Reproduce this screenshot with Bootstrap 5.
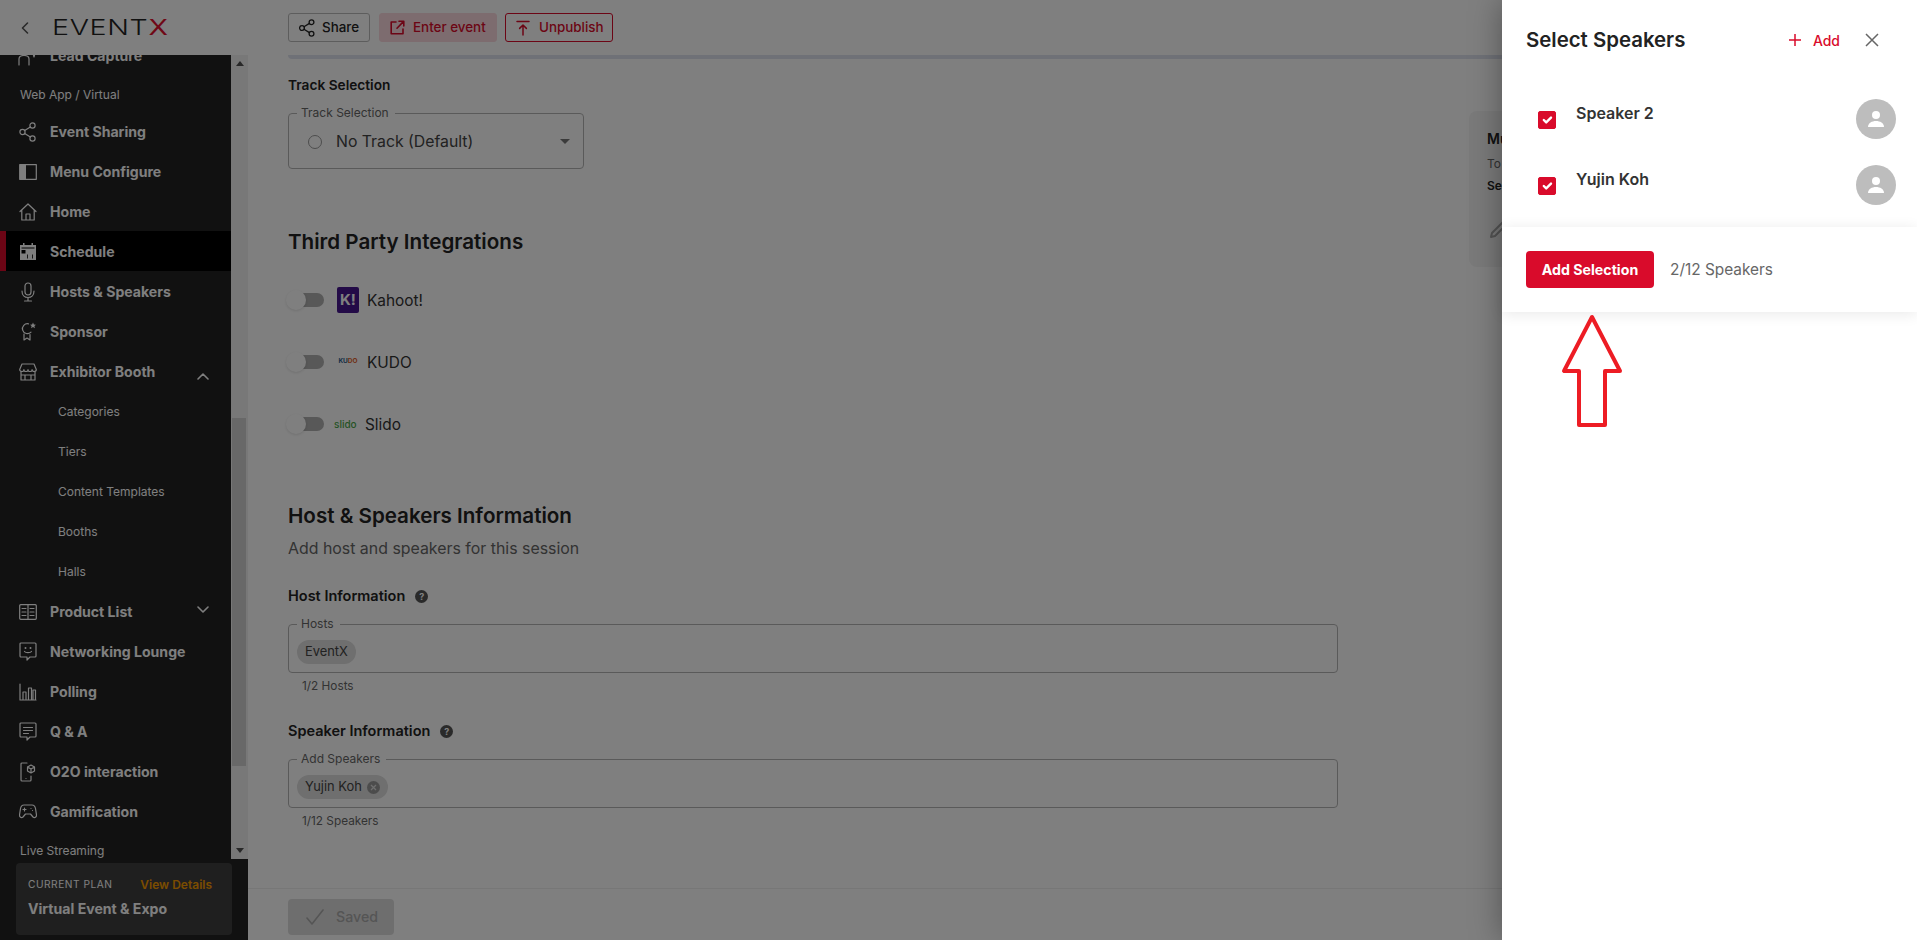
<!doctype html>
<html lang="en">
<head>
<meta charset="utf-8">
<title>EventX - Select Speakers</title>
<link href="https://cdn.jsdelivr.net/npm/bootstrap@5.3.0/dist/css/bootstrap.min.css" rel="stylesheet">
<style>
html,body{height:940px;overflow:hidden}
body{font-family:Inter,"Noto Sans",sans-serif;color:#222;background:#fff;position:relative;font-size:14px}
svg{display:block;flex:none}
.ln{fill:none;stroke:currentColor;stroke-width:1.2;stroke-linecap:round;stroke-linejoin:round}
.top-bar{height:55px;background:#fff;flex:none}
.back-cell{width:52px}
.brand-wrap{width:236px}
.brand-text{display:inline-block;font-size:22px;font-weight:300;letter-spacing:.5px;line-height:1;color:#222;transform:scaleX(1.3);transform-origin:left center}
.brand-text b{font-weight:400;color:#e0102e}
.top-btn{height:29px;padding:0 0 0 10px;font-size:13.4px;font-weight:500;border-radius:3px;display:flex;align-items:center;background:#fff}
.btn-share{width:82px;border:1px solid #bbb;color:#222;gap:7px;margin-right:9px}
.btn-enter{width:118px;border:1px solid #fbd9de;background:#fbd9de;color:#d90b2b;gap:8px;margin-right:8px}
.btn-unpub{width:108px;border:1px solid #d90b2b;color:#d90b2b;gap:9px}
.body-row{height:885px}
.side-col{width:248px;background:#222;color:#fff}
.side-main{height:804px}
.side-scroll{width:231px;overflow:hidden}
.side-inner{margin-top:-20px}
.side-row{height:40px;padding:1px 0 0 19px;display:flex;align-items:center;font-size:14.1px;font-weight:700;position:relative}
.side-row .ico{width:18px;margin-right:13px;display:flex;justify-content:center}
.side-row.active{background:#000;border-left:6px solid #d90b2b;padding-left:13px}
.side-head{height:36px;padding:3px 0 0 20px;display:flex;align-items:center;font-size:12px;font-weight:400}
.side-sub{height:40px;padding:2px 0 0 58px;display:flex;align-items:center;font-size:12px;font-weight:400}
.chev{position:absolute;left:197px}
.chev-up{top:21px}
.chev-down{top:15px}
.sbar{width:17px;background:#f1f1f1}
.sbar-btn{height:17px;display:flex;align-items:center;justify-content:center;color:#505050}
.sbar-thumb{width:14px;height:348px;margin-top:346px;background:#d0d0d0;margin-left:1px}
.plan-wrap{height:81px;padding:4px 16px 0}
.plan-box{width:216px;height:72px;background:#3e3e3e;border-radius:4px;padding:13px 20px 0 12px}
.plan-k{font-size:10.2px;letter-spacing:.5px;font-weight:400}
.plan-v{color:#f59a00;font-size:12px;font-weight:600}
.plan-n{font-size:14.1px;font-weight:700;margin-top:4px}
.band{height:4px;margin-left:40px;background:#dfe3ee;border-bottom-left-radius:6px;flex:none}
.content-wrap{padding-left:40px;overflow:hidden}
.form-col{width:1050px;flex:none}
.sec-label{font-size:14.5px;font-weight:600;line-height:20px;color:#222}
.sec-label-sm{font-size:13.7px;font-weight:600;line-height:20px;color:#222;margin-top:16px}
.sec-title{font-size:20.6px;font-weight:600;line-height:28px;color:#222;margin:0}
.fset{border:1px solid #b5b5b5;border-radius:4px;padding:0 8px;margin:10px 0 0;display:block;min-width:0}
.fset legend{float:none;width:auto;font-size:12px;line-height:16px;padding:0 6px 0 4px;margin:0;color:#666}
.fset-track{width:296px;height:64px}
.track-inner{margin-top:9px;padding:0 5px 0 11px}
.radio-dot{width:14px;height:14px;border:1px solid #999;border-radius:50%}
.track-val{font-size:15.8px;color:#444;margin-left:14px}
.caret-down{width:0;height:0;border-left:5px solid transparent;border-right:5px solid transparent;border-top:5px solid #777}
.m-third{margin-top:59px}
.tg-row{height:40px;margin-top:22px;display:flex;align-items:center}
.tg-first{margin-top:24px}
.tg-track{width:28px;height:14px;background:#b0b0b0;border-radius:7px;margin-left:8px;position:relative;flex:none}
.tg-thumb{position:absolute;left:-10px;top:-3px;width:20px;height:20px;border-radius:50%;background:#fff;box-shadow:0 1px 3px rgba(0,0,0,.12)}
.tg-name{font-size:15.4px;color:#333;padding-top:1px}
.kh-logo{width:22px;height:26px;background:#46178f;border-radius:2px;color:#fff;font-size:15px;font-weight:700;line-height:26px;text-align:center;margin:0 8px 0 13px}
.kd-logo{width:22px;margin:0 8px 0 13px;font-size:6.5px;font-weight:700;text-align:center}
.kd-a{color:#2a5b8c}
.kd-b{color:#e2602c}
.sl-logo{width:28px;margin:0 3px 0 10px;font-size:10px;font-weight:500;color:#4aa74a}
.m-host{margin-top:58px}
.sub-text{font-size:15.9px;line-height:24px;color:#666;margin-top:7px}
.m-25{margin-top:25px}
.m-27{margin-top:27px}
.help-q{width:13px;height:13px;border-radius:50%;background:#555;color:#fff;font-size:9px;font-weight:700;line-height:13px;text-align:center;margin-left:10px}
.fset-chip{height:57px}
.chip-item{height:24px;border-radius:12px;background:#dedede;padding:0 8px;font-size:12.9px;color:#444;display:inline-flex;align-items:center;gap:5px;margin-top:8px}
.chip-x{width:13px;height:13px;border-radius:50%;background:#999;color:#dedede;display:flex;align-items:center;justify-content:center}
.fset-note{font-size:11.8px;line-height:16px;color:#666;margin:5px 0 0 14px}
.aside-box{width:500px;height:156px;margin:52px 0 0 131px;background:#f4f4f4;border-radius:8px;padding:12px 14px 0 18px;flex:none}
.aside-t{font-size:14px;font-weight:600;line-height:20px;margin-top:6px}
.aside-d{font-size:12px;color:#666;margin-top:6px}
.aside-s{font-size:12px;font-weight:600;margin-top:4px}
.aside-pen{margin:24px 0 0 2px;color:#a8a8a8}
.save-bar{height:52px;border-top:1px solid #eee;padding:10px 0 0 40px;flex:none}
.saved-btn{width:106px;height:36px;background:#ddd;border-radius:4px;color:#aaa;display:flex;align-items:center;gap:12px;padding-left:18px;font-size:14.2px;font-weight:500}
.dim-layer{position:absolute;inset:0;background:rgba(0,0,0,.5);z-index:5}
.drawer{position:absolute;top:0;right:0;bottom:0;width:415px;background:#fff;z-index:6;box-shadow:0 0 30px rgba(0,0,0,.35)}
.dr-head{height:80px;padding:0 38px 0 24px}
.dr-title{font-size:20.4px;font-weight:600;color:#222;margin:0;line-height:1.2}
.dr-add{color:#d90b2b;font-size:14px;font-weight:500;gap:12px;margin-right:25px}
.dr-close{color:#666}
.dr-list{height:147px;padding:6px 0 0 36px}
.dr-row{height:66px;padding-right:21px}
.dr-check.form-check-input{width:18px;height:18px;margin:25px 20px 0 0;border-radius:2px;background-color:#d90b2b;border-color:#d90b2b;flex:none}
.dr-name{font-size:16px;font-weight:600;color:#333;margin-top:16px;line-height:22px}
.dr-avatar{width:40px;height:40px;border-radius:50%;background:#bdbdbd;color:#fff;margin-top:13px;display:flex;align-items:center;justify-content:center}
.dr-foot{height:85px;padding-left:24px;background:#fff;box-shadow:0 2px 14px rgba(0,0,0,.09);position:relative}
.dr-save{width:128px;height:37px;background:#d90b2b;color:#fff;border:0;border-radius:4px;font-size:14.2px;font-weight:700;padding:0}
.dr-count{font-size:15.4px;color:#666;margin-left:16px}
.red-arrow{position:absolute;left:59px;top:314px;z-index:7}
</style>
</head>
<body class="d-flex flex-column">

<header class="top-bar d-flex align-items-center">
  <div class="back-cell d-flex justify-content-center">
    <svg width="10" height="14" viewBox="0 0 10 14"><path class="ln" style="stroke-width:1.6;color:#555" d="M6.500 2 1.500 7l5 5"/></svg>
  </div>
  <div class="brand-wrap"><span class="brand-text">EVENT<b>X</b></span></div>
  <div class="d-flex align-items-center">
    <div class="top-btn btn-share">
      <svg width="16" height="18" viewBox="0 0 16 18"><g class="ln" style="stroke-width:1.3"><circle cx="3" cy="9" r="2.400"/><circle cx="12.500" cy="3.200" r="2.400"/><circle cx="12.500" cy="14.800" r="2.400"/><path d="M5 7.700 10.400 4.400M5 10.300l5.400 3.300"/></g></svg>
      <span>Share</span>
    </div>
    <div class="top-btn btn-enter">
      <svg width="15" height="15" viewBox="0 0 15 15"><g class="ln" style="stroke-width:1.6"><path d="M6 2H1.200v11.800H13V9"/><path d="M7 8.200 13.600 1.400M9 1.200h4.800V6"/></g></svg>
      <span>Enter event</span>
    </div>
    <div class="top-btn btn-unpub">
      <svg width="14" height="16" viewBox="0 0 14 16"><g class="ln" style="stroke-width:1.5"><path d="M1 1.500h12M7 15V5M3.600 8.400 7 5l3.400 3.400"/></g></svg>
      <span>Unpublish</span>
    </div>
  </div>
</header>

<div class="body-row d-flex">
  <aside class="side-col d-flex flex-column flex-none">
    <div class="side-main d-flex">
      <nav class="side-scroll">
        <div class="side-inner">
          <div class="side-row"><span class="ico"><svg width="20" height="20" viewBox="0 0 20 20"><g class="ln"><circle cx="6" cy="4" r="3"/><path d="M1 19v-6c0-2 2-3.500 5-3.500s5 1.500 5 3.500v6M14 4l2 7 2-7"/></g></svg></span>Lead Capture</div>
          <div class="side-head">Web App / Virtual</div>
          <div class="side-row"><span class="ico"><svg width="18" height="20" viewBox="0 0 18 20"><g class="ln"><circle cx="3.500" cy="10" r="2.600"/><circle cx="13.500" cy="3.500" r="2.600"/><circle cx="13.500" cy="16.500" r="2.600"/><path d="M5.700 8.600 11.300 5M5.700 11.400l5.600 3.600"/></g></svg></span>Event Sharing</div>
          <div class="side-row"><span class="ico"><svg width="18" height="16" viewBox="0 0 18 16"><rect x=".7" y=".7" width="16.600" height="14.600" class="ln"/><rect x="1" y="1" width="6" height="14" fill="currentColor"/></svg></span>Menu Configure</div>
          <div class="side-row"><span class="ico"><svg width="18" height="18" viewBox="0 0 18 18"><g class="ln"><path d="M1 8.500 9 1l8 7.500M2.800 7v10h12.400V7M7 17v-6h4v6"/></g></svg></span>Home</div>
          <div class="side-row active"><span class="ico"><svg width="16" height="17" viewBox="0 0 16 17"><path fill="currentColor" fill-rule="evenodd" d="M3 0h1.500v2h7V0H13v2h3v15H0V2h3zM1.500 4.500v1h13v-1zM1.500 7v3.500h4V7zM7 11.500v4h.8v-4zM12 11.500v4h.8v-4z"/></svg></span>Schedule</div>
          <div class="side-row"><span class="ico"><svg width="14" height="20" viewBox="0 0 14 20"><g class="ln"><rect x="4" y="1" width="6" height="12" rx="3"/><path d="M1 9c0 4 2.500 6.500 6 6.500s6-2.500 6-6.500M7 15.500V19M3.500 19h7"/></g></svg></span>Hosts &amp; Speakers</div>
          <div class="side-row"><span class="ico"><svg width="16" height="19" viewBox="0 0 16 19"><g class="ln"><path d="M8.500 1.800a5 5 0 1 0 2.500 8.400M4 12v6l3-2 3 2v-5.500"/></g><path fill="currentColor" d="m13 .5.900 2 2.100.2-1.600 1.400.5 2.100-1.900-1.100-1.900 1.100.5-2.100L10 2.700l2.100-.2z"/></svg></span>Sponsor</div>
          <div class="side-row"><span class="ico"><svg width="18" height="18" viewBox="0 0 18 18"><g class="ln"><path d="M3 1h12l2.300 5.500c0 1.500-1.300 2-2.200 2s-2-.6-2-1.800c0 1.200-1.100 1.800-2.100 1.800S9 8 9 6.700C9 8 8 8.500 7 8.500S4.900 7.900 4.900 6.700c0 1.200-1 1.800-2 1.800S.7 8 .7 6.500zM2 8.500V17h14V8.500M2 12h14M6 12v5M12 12v5"/></g></svg></span>Exhibitor Booth<svg class="chev chev-up" width="12" height="8" viewBox="0 0 12 8"><path class="ln" style="stroke-width:1.600" d="m1 7 5-5 5 5"/></svg></div>
          <div class="side-sub">Categories</div>
          <div class="side-sub">Tiers</div>
          <div class="side-sub">Content Templates</div>
          <div class="side-sub">Booths</div>
          <div class="side-sub">Halls</div>
          <div class="side-row"><span class="ico"><svg width="18" height="16" viewBox="0 0 18 16"><g class="ln"><rect x=".7" y=".7" width="16.600" height="14.600" rx="1"/><path d="M9 1v14M3 4.500h4M3 8h4M3 11.500h4M11 4.500h4M11 8h4M11 11.500h4"/></g></svg></span>Product List<svg class="chev chev-down" width="12" height="8" viewBox="0 0 12 8"><path class="ln" style="stroke-width:1.600" d="m1 1 5 5 5-5"/></svg></div>
          <div class="side-row"><span class="ico"><svg width="18" height="19" viewBox="0 0 18 19"><g class="ln"><path d="M2 1h14a1 1 0 0 1 1 1v12a1 1 0 0 1-1 1h-5l-3 3v-3H2a1 1 0 0 1-1-1V2a1 1 0 0 1 1-1z"/><path d="M5.500 9.500c1 1.500 6 1.500 7 0"/></g><circle cx="6.500" cy="6" r="1" fill="currentColor"/><circle cx="11.500" cy="6" r="1" fill="currentColor"/></svg></span>Networking Lounge</div>
          <div class="side-row"><span class="ico"><svg width="18" height="18" viewBox="0 0 18 18"><g class="ln"><path d="M1 1v16h16M4 17V9h3v8M9.500 17V5h3v12M14 17V7h2.500v10"/></g></svg></span>Polling</div>
          <div class="side-row"><span class="ico"><svg width="18" height="19" viewBox="0 0 18 19"><g class="ln"><path d="M2 1h14a1 1 0 0 1 1 1v12a1 1 0 0 1-1 1h-5l-3 3v-3H2a1 1 0 0 1-1-1V2a1 1 0 0 1 1-1z"/><path d="M4.500 5.500h9M4.500 8.500h9M4.500 11.500h5"/></g></svg></span>Q &amp; A</div>
          <div class="side-row"><span class="ico"><svg width="16" height="20" viewBox="0 0 16 20"><g class="ln"><path d="M7 1H2a1 1 0 0 0-1 1v16a1 1 0 0 0 1 1h8a1 1 0 0 0 1-1v-4"/><path d="m11 3 3.500 2v4L11 11 7.500 9V5zM11 7l3.500-2M11 7 7.500 5M11 7v4M6 16.500h0"/></g></svg></span>O2O interaction</div>
          <div class="side-row"><span class="ico"><svg width="18" height="15" viewBox="0 0 18 15"><g class="ln"><path d="M5 1h8c2 0 3 1 3.500 3.500l1 6.500c.2 2-1.800 3.300-3.500 2L11.500 10h-5L4 13c-1.700 1.300-3.700 0-3.500-2l1-6.500C2 2 3 1 5 1z"/><path d="M5.500 4v3M4 5.500h3M12 4.500h0M13.500 6.500h0"/></g></svg></span>Gamification</div>
          <div class="side-head">Live Streaming</div>
        </div>
      </nav>
      <div class="sbar d-flex flex-column">
        <div class="sbar-btn"><div style="width:0;height:0;border-left:4px solid transparent;border-right:4px solid transparent;border-bottom:5px solid currentColor"></div></div>
        <div class="sbar-thumb"></div>
        <div class="flex-grow-1"></div>
        <div class="sbar-btn"><div class="caret-down" style="border-left-width:4px;border-right-width:4px;border-top-color:currentColor"></div></div>
      </div>
    </div>
    <div class="plan-wrap">
      <div class="plan-box">
        <div class="d-flex justify-content-between align-items-center"><span class="plan-k">CURRENT PLAN</span><span class="plan-v">View Details</span></div>
        <div class="plan-n">Virtual Event &amp; Expo</div>
      </div>
    </div>
  </aside>

  <main class="flex-grow-1 d-flex flex-column" style="min-width:0">
    <div class="band"></div>
    <div class="content-wrap d-flex flex-grow-1">
      <div class="form-col">
        <div class="sec-label-sm">Track Selection</div>
        <fieldset class="fset fset-track">
          <legend>Track Selection</legend>
          <div class="track-inner d-flex align-items-center">
            <span class="radio-dot"></span>
            <span class="track-val flex-grow-1">No Track (Default)</span>
            <span class="caret-down"></span>
          </div>
        </fieldset>

        <h2 class="sec-title m-third">Third Party Integrations</h2>
        <div class="tg-row tg-first">
          <div class="tg-track"><span class="tg-thumb"></span></div>
          <span class="kh-logo">K!</span><span class="tg-name">Kahoot!</span>
        </div>
        <div class="tg-row">
          <div class="tg-track"><span class="tg-thumb"></span></div>
          <span class="kd-logo"><span class="kd-a">KU</span><span class="kd-b">DO</span></span><span class="tg-name">KUDO</span>
        </div>
        <div class="tg-row">
          <div class="tg-track"><span class="tg-thumb"></span></div>
          <span class="sl-logo">slido</span><span class="tg-name">Slido</span>
        </div>

        <h2 class="sec-title m-host">Host &amp; Speakers Information</h2>
        <div class="sub-text">Add host and speakers for this session</div>

        <div class="sec-label m-25 d-flex align-items-center">Host Information <span class="help-q">?</span></div>
        <fieldset class="fset fset-chip">
          <legend>Hosts</legend>
          <span class="chip-item">EventX</span>
        </fieldset>
        <div class="fset-note">1/2 Hosts</div>

        <div class="sec-label m-27 d-flex align-items-center">Speaker Information <span class="help-q">?</span></div>
        <fieldset class="fset fset-chip">
          <legend>Add Speakers</legend>
          <span class="chip-item">Yujin Koh <span class="chip-x"><svg width="7" height="7" viewBox="0 0 7 7"><path d="m1 1 5 5M6 1 1 6" stroke="currentColor" stroke-width="1.300"/></svg></span></span>
        </fieldset>
        <div class="fset-note">1/12 Speakers</div>
      </div>
      <div class="aside-box">
        <div class="aside-t">Multi-language</div>
        <div class="aside-d">To translate</div>
        <div class="aside-s">Select</div>
        <svg class="aside-pen" width="20" height="20" viewBox="0 0 20 20"><path class="ln" style="stroke-width:2" d="M2 18 3 14 14 3l3 3L6 17z"/></svg>
      </div>
    </div>
    <div class="save-bar">
      <div class="saved-btn">
        <svg width="18" height="16" viewBox="0 0 18 16"><path class="ln" style="stroke-width:1.600" d="m1 9 5 6L17 1"/></svg>
        <span>Saved</span>
      </div>
    </div>
  </main>
</div>

<div class="dim-layer"></div>

<section class="drawer d-flex flex-column">
  <div class="dr-head d-flex align-items-center">
    <h3 class="dr-title flex-grow-1">Select Speakers</h3>
    <div class="dr-add d-flex align-items-center">
      <svg width="12" height="12" viewBox="0 0 12 12"><path d="M6 0v12M0 6h12" stroke="currentColor" stroke-width="1.500"/></svg>
      <span>Add</span>
    </div>
    <svg class="dr-close" width="14" height="14" viewBox="0 0 14 14"><path d="m1 1 12 12M13 1 1 13" stroke="currentColor" stroke-width="1.500"/></svg>
  </div>
  <div class="dr-list">
    <div class="dr-row d-flex">
      <input class="form-check-input dr-check" type="checkbox" checked aria-label="Speaker 2">
      <div class="dr-name flex-grow-1">Speaker 2</div>
      <div class="dr-avatar"><svg width="20" height="20" viewBox="0 0 20 20"><circle cx="10" cy="6" r="4" fill="currentColor"/><path d="M2 18c0-4 4-6 8-6s8 2 8 6z" fill="currentColor"/></svg></div>
    </div>
    <div class="dr-row d-flex">
      <input class="form-check-input dr-check" type="checkbox" checked aria-label="Yujin Koh">
      <div class="dr-name flex-grow-1">Yujin Koh</div>
      <div class="dr-avatar"><svg width="20" height="20" viewBox="0 0 20 20"><circle cx="10" cy="6" r="4" fill="currentColor"/><path d="M2 18c0-4 4-6 8-6s8 2 8 6z" fill="currentColor"/></svg></div>
    </div>
  </div>
  <div class="dr-foot d-flex align-items-center">
    <button class="btn dr-save" type="button">Add Selection</button>
    <span class="dr-count">2/12 Speakers</span>
  </div>
  <svg class="red-arrow" width="62" height="114" viewBox="0 0 62 114"><path d="M31 3 3 57h15v54h26V57h15z" fill="none" stroke="#ed1c24" stroke-width="4" stroke-linejoin="round"/></svg>
</section>

<script src="https://cdn.jsdelivr.net/npm/bootstrap@5.3.0/dist/js/bootstrap.bundle.min.js"></script>
</body>
</html>
